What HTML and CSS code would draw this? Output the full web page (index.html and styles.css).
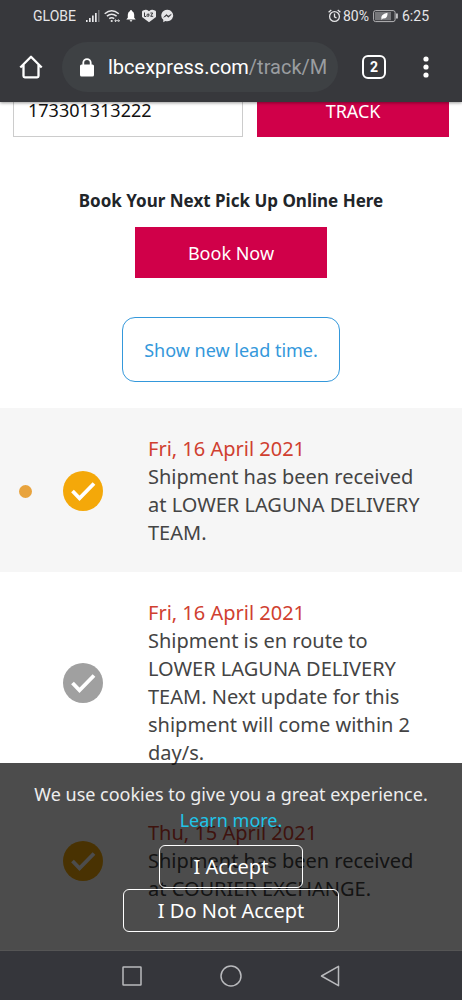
FILE: index.html
```html
<!DOCTYPE html>
<html lang="en">
<head>
<meta charset="utf-8">
<meta name="viewport" content="width=device-width, initial-scale=1">
<title>Track shipment</title>
<link rel="stylesheet" href="styles.css">
</head>
<body>
<div class="phone">
  <header class="browser">
    <div class="status">
      <span class="carrier">GLOBE</span>
      <svg class="signal" width="14" height="14" viewBox="0 0 14 14" fill="#e6e6e8"><path d="M0 11h1.6v2H0zM3 9h1.7v4H3zM6 6.500h1.700V13H6zM9 4h1.700v9H9z"/><path d="M12 1h1.500v12H12z" opacity=".35"/></svg>
      <svg class="wifi" width="16" height="14" viewBox="0 0 16 14" fill="none" stroke="#e6e6e8" stroke-width="1.500"><path d="M.7 4.700Q7.700-1.300 14.800 4.700M2.900 7.200q4.800-4 9.700 0M5.200 9.700q2.500-2 5 0"/><circle cx="7.700" cy="12" r="1.100" fill="#e6e6e8" stroke="none"/><path d="M11 11.700h4.300M12 10.400l-1.300 1.300 1.300 1.300M14.300 10.400l1.300 1.300-1.300 1.300" stroke-width=".9"/></svg>
      <svg class="bell" width="10" height="12" viewBox="0 0 10 12" fill="#fff"><path d="M5 0q1 0 1 1.100Q8.200 2 8.200 4.800V7.700L9.700 9.600H.3L1.800 7.700V4.800Q1.800 2 4 1.100 4 0 5 0M3.700 10.200h2.600Q6.200 11.500 5 11.500t-1.300-1.300"/></svg>
      <svg class="laz" width="16" height="14" viewBox="0 0 16 14"><path d="M1 2.800Q1 1.700 2 1.500L4.500.8Q6 .6 8 2.200 10 .6 11.500.8L14 1.500Q15 1.700 15 2.800V8L8 13.300 1 8z" fill="#e6e6e8"/><path d="M3.500 3.500v4h1.800M7.900 5.200q-2-.7-2 1.100 0 1.500 2 .8V4.800M9.400 4h2.300L9.700 7.300h2.500" stroke="#37383c" fill="none"/></svg>
      <svg class="messenger" width="13" height="14" viewBox="0 0 13 14"><path d="M6.500.7A6 5.800 0 0 0 2.300 10.800v2.400l2-1.200A6 5.800 0 1 0 6.500.7" fill="#e6e6e8"/><path d="M2.700 8.200l2.700-2.700 1.900 1.600 2.900-1.700-2.700 2.900-1.900-1.600z" fill="#37383c" stroke="#37383c" stroke-width=".6"/></svg>
      <span class="spacer"></span>
      <svg class="alarm" width="13" height="14" viewBox="0 0 13 14" fill="none" stroke="#e6e6e8" stroke-width="1.300"><circle cx="6.500" cy="7.500" r="4.900"/><path d="M.6 3.200L3.300.9M12.400 3.200L9.700.9M6.500 4.600v3.200l2 1.200"/></svg>
      <span class="percent">80%</span>
      <svg class="battery" width="25" height="14" viewBox="0 0 25 14"><rect x=".6" y="1.600" width="21.500" height="11" rx="2" fill="none" stroke="#b5b5b8"/><path d="M2 3h16v8.200H2z" fill="#77787b"/><path d="M8.500 10.200Q7 5.500 14.500 3.800 15 10 9.800 9.600L8.500 11z" fill="#fff"/><path d="M23.200 4.500h1.500v5h-1.500z" fill="#e6e6e8"/></svg>
      <span>6:25</span>
    </div>
    <div class="toolbar">
      <button class="icon home" aria-label="Home"><svg width="24" height="24" viewBox="0 0 24 24" fill="none" stroke="#fff" stroke-width="2.300" stroke-linejoin="round"><path d="M1.300 12.500L12 1.800l10.700 10.700M4.500 10v11q0 1.300 1.300 1.300h12.400q1.300 0 1.300-1.300V10"/></svg></button>
      <button class="address" aria-label="Address">
        <svg width="14" height="19" viewBox="0 0 14 19"><path d="M3.300 7V4.800a3.700 3.700 0 0 1 7.400 0V7" fill="none" stroke="#fff" stroke-width="1.800"/><rect y="6.500" width="14" height="12" rx="1.600" fill="#fff"/></svg>
        <span class="url">lbcexpress.com<span class="path">/track/M</span></span>
      </button>
      <button class="icon tabs" aria-label="Tabs">2</button>
      <button class="icon more" aria-label="Menu"><svg width="6" height="22" viewBox="0 0 6 22" fill="#fff"><circle cx="3" cy="3" r="2.600"/><circle cx="3" cy="11" r="2.600"/><circle cx="3" cy="19" r="2.600"/></svg></button>
    </div>
  </header>

  <main class="page">
    <form class="track">
      <input type="text" value="173301313222" aria-label="Tracking number">
      <button type="button">TRACK</button>
    </form>
    <section class="booking">
      <h2>Book Your Next Pick Up Online Here</h2>
      <button class="book">Book Now</button>
      <button class="lead">Show new lead time.</button>
    </section>
    <ol class="history">
      <li class="event shaded">
        <span class="dot"></span>
        <svg class="check" viewBox="0 0 40 40"><circle cx="20" cy="20" r="20" fill="#f4a809"/><path d="M9.500 20l7 7.300L31 12.500" fill="none" stroke="#fff" stroke-width="3.800"/></svg>
        <p><time>Fri, 16 April 2021</time>Shipment has been received at LOWER LAGUNA DELIVERY TEAM.</p>
      </li>
      <li class="event">
        <span></span>
        <svg class="check" viewBox="0 0 40 40"><circle cx="20" cy="20" r="20" fill="#a0a0a0"/><path d="M9.500 20l7 7.300L31 12.500" fill="none" stroke="#fff" stroke-width="3.800"/></svg>
        <p><time>Fri, 16 April 2021</time>Shipment is en route to LOWER LAGUNA DELIVERY TEAM. Next update for this shipment will come within 2 day/s.</p>
      </li>
      <li class="event">
        <span></span>
        <svg class="check" viewBox="0 0 40 40"><circle cx="20" cy="20" r="20" fill="#f4a809"/><path d="M9.500 20l7 7.300L31 12.500" fill="none" stroke="#fff" stroke-width="3.800"/></svg>
        <p><time>Thu, 15 April 2021</time>Shipment has been received at COURIER EXCHANGE.</p>
      </li>
    </ol>
    <aside class="cookies">
      <p>We use cookies to give you a great experience. <a href="#">Learn more.</a></p>
      <button class="accept">I Accept</button>
      <button class="decline">I Do Not Accept</button>
    </aside>
  </main>

  <nav class="system">
    <button class="icon" aria-label="Recent apps"><svg width="20" height="20" viewBox="0 0 20 20" fill="none" stroke="#b9babd" stroke-width="1.500"><rect x="1" y="1" width="18" height="18" rx=".5"/></svg></button>
    <button class="icon" aria-label="Home screen"><svg width="22" height="22" viewBox="0 0 22 22" fill="none" stroke="#b9babd" stroke-width="1.500"><circle cx="11" cy="11" r="10"/></svg></button>
    <button class="icon" aria-label="Back"><svg width="20" height="22" viewBox="0 0 20 22" fill="none" stroke="#b9babd" stroke-width="1.500" stroke-linejoin="round"><path d="M18.500 1.300v19.400L1.500 11z"/></svg></button>
  </nav>
</div>
</body>
</html>
```

FILE: styles.css
```css
* { box-sizing: border-box; }
body {
  margin: 0;
  font-family: "Noto Sans", "Open Sans", sans-serif;
  color: #444;
}
button, input { font: inherit; margin: 0; padding: 0; border: 0; border-radius: 0; }
button { cursor: pointer; }
h2, p, ol { margin: 0; padding: 0; }

.phone { display: flex; flex-direction: column; height: 100vh; overflow: hidden; }

.browser {
  flex: none;
  background: #37383c;
  color: #fff;
  font-family: Roboto, sans-serif;
  box-shadow: 0 1px 3px rgba(0, 0, 0, .4);
  z-index: 1;
}
.status {
  display: flex;
  align-items: center;
  height: 32px;
  padding: 0 33px;
  font-size: 14px;
  color: #e6e6e8;
}
.status svg { flex: none; }
.carrier { margin-right: 10px; }
.signal { margin-right: 4px; }
.wifi { margin-right: 6px; }
.bell { margin-right: 5px; }
.laz { margin-right: 4px; }
.spacer { flex: 1; }
.percent { margin: 0 4px 0 2px; }
.battery { margin-right: 4px; }

.toolbar { display: flex; align-items: center; height: 70px; padding: 0 16px 0 0; }
.icon {
  display: flex;
  align-items: center;
  justify-content: center;
  flex: none;
  background: none;
  color: #fff;
}
.home { width: 62px; height: 48px; }
.address {
  display: flex;
  align-items: center;
  flex: 1;
  min-width: 0;
  height: 50px;
  padding: 0 8px 0 18px;
  gap: 14px;
  border-radius: 25px;
  background: #3e4144;
  color: #fff;
  font-size: 20px;
}
.address svg { flex: none; }
.url {
  flex: 1;
  min-width: 0;
  overflow: hidden;
  white-space: nowrap;
  text-align: left;
}
.path { color: #9a9da0; }
.tabs {
  width: 24px;
  height: 24px;
  margin: 0 36px 0 24px;
  border: 2px solid #fff;
  border-radius: 6px;
  font-size: 14px;
  font-weight: 700;
}
.more { width: 8px; height: 48px; margin-right: 16px; }

.page { position: relative; flex: 1; min-height: 0; overflow: hidden; background: #fff; }

.track { display: grid; grid-template-columns: 6fr 5fr; gap: 14px; padding: 0 13px; }
.track input, .track button { width: 100%; min-width: 0; height: 35px; padding-bottom: 18px; font-size: 18px; line-height: 18px; }
.track input {
  padding-left: 14px;
  border: 1px solid #ccc;
  border-top: 0;
  color: #111;
}
.track button, .book { background: #d00049; color: #fff; }

.booking { display: flex; flex-direction: column; align-items: center; padding: 52px 13px 26px; }
.booking h2 { margin-bottom: 14px; font-size: 17px; line-height: 24px; font-weight: 700; color: #212529; }
.book { width: 192px; height: 51px; margin-bottom: 39px; font-size: 18px; }
.lead {
  height: 65px;
  padding: 0 21px;
  border: 1px solid #3498db;
  border-radius: 13px;
  background: #fff;
  color: #3498db;
  font-size: 18px;
}

.history { list-style: none; }
.event {
  display: grid;
  grid-template-columns: 51px 97px 1fr;
  align-items: center;
  padding: 27px 26px 25px 0;
}
.shaded { background: #f6f6f6; }
.dot { justify-self: center; width: 13px; height: 13px; border-radius: 50%; background: #e8a33d; }
.check { width: 40px; height: 40px; margin-left: 12px; }
.event p { font-size: 20px; line-height: 28px; }
.event time { display: block; color: #d04030; }

.cookies {
  position: absolute;
  left: 0;
  right: 0;
  bottom: 0;
  display: flex;
  flex-direction: column;
  align-items: center;
  gap: 1px;
  padding: 18px 26px;
  background: rgba(0, 0, 0, .7);
  border-bottom: 1px solid #555;
  color: #eee;
  text-align: center;
}
.cookies p { margin-bottom: 11px; font-size: 18px; line-height: 26px; }
.cookies a { color: #20c4e8; text-decoration: none; }
.cookies button {
  height: 43px;
  padding: 0 34px;
  border: 1px solid #fff;
  border-radius: 6px;
  background: none;
  color: #fff;
  font-size: 20px;
}

.system {
  display: flex;
  flex: none;
  align-items: center;
  justify-content: center;
  gap: 78px;
  height: 49px;
  background: #35363b;
}
```
